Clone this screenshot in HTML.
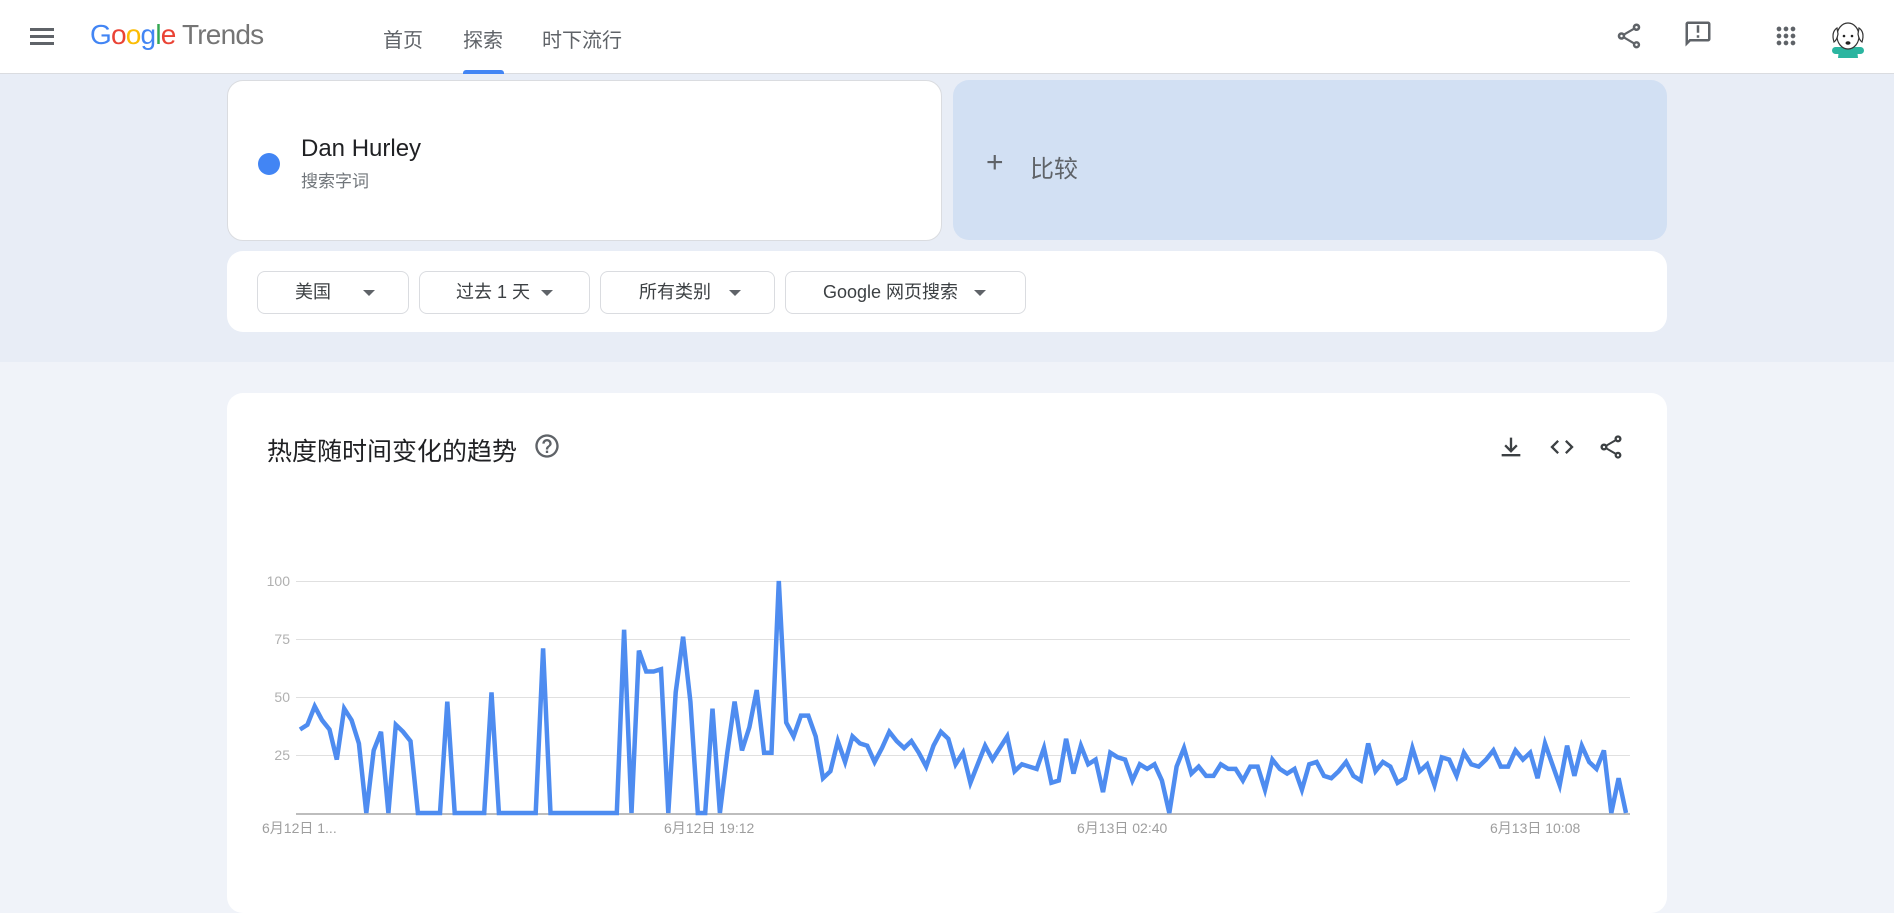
<!DOCTYPE html>
<html><head><meta charset="utf-8">
<style>
*{margin:0;padding:0;box-sizing:border-box}
body{width:1894px;height:872px;overflow:hidden;background:#f0f3f9;font-family:"Liberation Sans","Noto Sans CJK SC",sans-serif;position:relative}
.hdr{position:absolute;left:0;top:0;width:1894px;height:74px;background:#fff;border-bottom:1px solid #dadce0}
.band{position:absolute;left:0;top:74px;width:1894px;height:288px;background:#e8edf6}
.abs{position:absolute}
.nav{position:absolute;top:24px;font-size:20px;color:#5f6368}
.card{position:absolute;background:#fff;border-radius:16px}
.dd{position:absolute;top:271px;height:43px;border:1px solid #dadce0;border-radius:8px;background:#fff;font-size:18px;color:#3c4043;line-height:41px}
.dd i{position:absolute;top:18px;width:0;height:0;border-left:6px solid transparent;border-right:6px solid transparent;border-top:6px solid #5f6368}
.yl{position:absolute;left:250px;width:40px;text-align:right;font-size:14px;color:#b0b0b0}
.gl{position:absolute;left:296px;width:1334px;height:1px;background:#e0e0e0}
.xl{position:absolute;top:818px;font-size:14px;color:#9e9e9e;white-space:nowrap}
</style></head><body>
<div class="hdr"></div>
<div class="band"></div>
<div class="abs" style="left:30px;top:28px;width:24px;height:3px;background:#5f6368"></div>
<div class="abs" style="left:30px;top:35px;width:24px;height:3px;background:#5f6368"></div>
<div class="abs" style="left:30px;top:42px;width:24px;height:3px;background:#5f6368"></div>
<div class="abs" style="left:90px;top:19px;font-size:28px;letter-spacing:-0.8px;white-space:nowrap"><span style="color:#4285f4">G</span><span style="color:#ea4335">o</span><span style="color:#fbbc05">o</span><span style="color:#4285f4">g</span><span style="color:#34a853">l</span><span style="color:#ea4335">e</span><span style="color:#757575"> Trends</span></div>
<div class="nav" style="left:383px">首页</div>
<div class="nav" style="left:463px">探索</div>
<div class="nav" style="left:542px">时下流行</div>
<div class="abs" style="left:463px;top:70px;width:41px;height:4px;background:#4285f4;border-radius:3px 3px 0 0"></div>
<svg class="abs" style="left:1614px;top:21px" width="30" height="30" viewBox="0 0 24 24"><path fill="#5f6368" d="M18 16.08c-.76 0-1.44.3-1.960.77L8.91 12.7c.05-.23.09-.46.09-.7s-.04-.47-.09-.7l7.05-4.11c.54.5 1.25.81 2.04.81 1.66 0 3-1.34 3-3s-1.340-3-3-3-3 1.34-3 3c0 .24.04.47.09.7L8.04 9.81C7.5 9.31 6.79 9 6 9c-1.66 0-3 1.34-3 3s1.34 3 3 3c.79 0 1.5-.31 2.04-.81l7.12 4.16c-.05.21-.08.43-.08.65 0 1.61 1.31 2.92 2.92 2.92s2.92-1.31 2.92-2.92-1.31-2.92-2.92-2.920zM18 4c.55 0 1 .45 1 1s-.45 1-1 1-1-.45-1-1 .45-1 1-1zM6 13c-.55 0-1-.45-1-1s.45-1 1-1 1 .45 1 1-.45 1-1 1zm12 7.02c-.55 0-1-.45-1-1s.45-1 1-1 1 .45 1 1-.45 1-1 1z"/></svg>
<svg class="abs" style="left:1683px;top:19px" width="30" height="30" viewBox="0 0 24 24"><path fill="#5f6368" d="M20 2H4c-1.1 0-2 .9-2 2v18l4-4h14c1.1 0 2-.9 2-2V4c0-1.1-.9-2-2-2zm0 14H5.17L4 17.170V4h16v12zM11 5h2v6h-2zm0 8h2v2h-2z"/></svg>
<svg class="abs" style="left:1772px;top:22px" width="28" height="28" viewBox="0 0 24 24"><path fill="#5f6368" d="M6 8c1.1 0 2-.9 2-2s-.9-2-2-2-2 .9-2 2 .9 2 2 2zm6 12c1.1 0 2-.9 2-2s-.9-2-2-2-2 .9-2 2 .9 2 2 2zm-6 0c1.1 0 2-.9 2-2s-.9-2-2-2-2 .9-2 2 .9 2 2 2zm0-6c1.1 0 2-.9 2-2s-.9-2-2-2-2 .9-2 2 .9 2 2 2zm6 0c1.1 0 2-.9 2-2s-.9-2-2-2-2 .9-2 2 .9 2 2 2zm4-8c0 1.1.9 2 2 2s2-.9 2-2-.9-2-2-2-2 .9-2 2zm-4 2c1.1 0 2-.9 2-2s-.9-2-2-2-2 .9-2 2 .9 2 2 2zm6 6c1.1 0 2-.9 2-2s-.9-2-2-2-2 .9-2 2 .9 2 2 2zm0 6c1.1 0 2-.9 2-2s-.9-2-2-2-2 .9-2 2 .9 2 2 2z"/></svg>
<svg class="abs" style="left:1828px;top:18px" width="40" height="40" viewBox="0 0 40 40">
<path d="M10 40 L11 31 L29 31 L30 40Z" fill="#2bb5a0"/>
<rect x="4" y="29" width="32" height="7" rx="3.5" fill="#2bb5a0"/>
<ellipse cx="20" cy="18" rx="11" ry="13" fill="#fff" stroke="#333" stroke-width="1.2"/>
<path d="M9 10 Q3 14 6 24 Q9 22 10 16Z" fill="#fff" stroke="#333" stroke-width="1.2"/>
<path d="M31 10 Q37 14 34 24 Q31 22 30 16Z" fill="#fff" stroke="#333" stroke-width="1.2"/>
<circle cx="16" cy="18" r="1.3" fill="#222"/><circle cx="24" cy="18" r="1.3" fill="#222"/>
<ellipse cx="20" cy="25" rx="2.5" ry="1.8" fill="#222"/>
</svg>
<div class="card" style="left:227px;top:80px;width:715px;height:161px;border:1px solid #dadce0"></div>
<div class="abs" style="left:258px;top:153px;width:22px;height:22px;border-radius:50%;background:#4285f4"></div>
<div class="abs" style="left:301px;top:135px;font-size:24px;color:#202124">Dan Hurley</div>
<div class="abs" style="left:301px;top:167px;font-size:17px;color:#70757a">搜索字词</div>
<div class="card" style="left:953px;top:80px;width:714px;height:160px;background:#d2e0f3"></div>
<div class="abs" style="left:986px;top:146px;font-size:30px;color:#5f6368;font-weight:300">+</div>
<div class="abs" style="left:1030px;top:149px;font-size:24px;color:#5f6368">比较</div>
<div class="card" style="left:227px;top:251px;width:1440px;height:81px"></div>
<div class="dd" style="left:257px;width:152px"><span style="position:absolute;left:37px">美国</span><i style="left:105px"></i></div>
<div class="dd" style="left:419px;width:171px"><span style="position:absolute;left:36px">过去 1 天</span><i style="left:121px"></i></div>
<div class="dd" style="left:600px;width:175px"><span style="position:absolute;left:38px">所有类别</span><i style="left:128px"></i></div>
<div class="dd" style="left:785px;width:241px"><span style="position:absolute;left:37px">Google 网页搜索</span><i style="left:188px"></i></div>
<div class="card" style="left:227px;top:393px;width:1440px;height:520px"></div>
<div class="abs" style="left:267px;top:432px;font-size:25px;color:#202124">热度随时间变化的趋势</div>
<svg class="abs" style="left:533px;top:432px" width="28" height="28" viewBox="0 0 24 24"><path fill="#5f6368" d="M11 18h2v-2h-2v2zm1-16C6.48 2 2 6.48 2 12s4.48 10 10 10 10-4.48 10-10S17.52 2 12 2zm0 18c-4.41 0-8-3.59-8-8s3.59-8 8-8 8 3.59 8 8-3.59 8-8 8zm0-14c-2.21 0-4 1.79-4 4h2c0-1.1.9-2 2-2s2 .9 2 2c0 2-3 1.75-3 5h2c0-2.25 3-2.5 3-5 0-2.21-1.790-4-4-4z"/></svg>
<svg class="abs" style="left:1497px;top:433px" width="28" height="28" viewBox="0 0 24 24"><path fill="#3c4043" d="M4 18h16v2H4zM11 4h2v9.2l3.3-3.3 1.4 1.4L12 17 6.3 11.3l1.4-1.4L11 13.2z"/></svg>
<svg class="abs" style="left:1548px;top:433px" width="28" height="28" viewBox="0 0 24 24"><path fill="#3c4043" d="M9.4 16.6 4.8 12l4.6-4.6L8 6l-6 6 6 6 1.4-1.4zm5.2 0 4.6-4.6-4.6-4.6L16 6l6 6-6 6-1.4-1.4z"/></svg>
<svg class="abs" style="left:1597px;top:433px" width="28" height="28" viewBox="0 0 24 24"><path fill="#3c4043" d="M18 16.08c-.76 0-1.44.3-1.96.77L8.91 12.7c.05-.23.09-.46.09-.7s-.04-.47-.09-.7l7.05-4.11c.54.5 1.25.81 2.04.81 1.66 0 3-1.34 3-3s-1.34-3-3-3-3 1.34-3 3c0 .24.04.47.09.7L8.04 9.81C7.5 9.31 6.79 9 6 9c-1.66 0-3 1.34-3 3s1.34 3 3 3c.79 0 1.5-.31 2.04-.81l7.12 4.16c-.05.21-.08.43-.08.65 0 1.61 1.31 2.92 2.92 2.92s2.92-1.31 2.92-2.92-1.31-2.92-2.92-2.92zM18 4c.55 0 1 .45 1 1s-.45 1-1 1-1-.45-1-1 .45-1 1-1zM6 13c-.55 0-1-.45-1-1s.45-1 1-1 1 .45 1 1-.45 1-1 1zm12 7.02c-.55 0-1-.45-1-1s.45-1 1-1 1 .45 1 1-.45 1-1 1z"/></svg>
<div class="gl" style="top:581px"></div><div class="yl" style="top:573px">100</div>
<div class="gl" style="top:639px"></div><div class="yl" style="top:631px">75</div>
<div class="gl" style="top:697px"></div><div class="yl" style="top:689px">50</div>
<div class="gl" style="top:755px"></div><div class="yl" style="top:747px">25</div>
<div class="gl" style="top:813px;height:2px;background:#bdbdbd"></div>
<div class="xl" style="left:262px">6月12日 1...</div>
<div class="xl" style="left:664px">6月12日 19:12</div>
<div class="xl" style="left:1077px">6月13日 02:40</div>
<div class="xl" style="left:1490px">6月13日 10:08</div>
<svg class="abs" style="left:0;top:0" width="1894" height="872"><polyline id="pl" fill="none" stroke="#4e8cf0" stroke-width="4.5" stroke-linejoin="miter" points=""/></svg>
<script>
var d=[36,38,46,40,36,23,45,40,30,0,27,35,0,38,35,31,0,0,0,0,48,0,0,0,0,0,52,0,0,0,0,0,0,71,0,0,0,0,0,0,0,0,0,0,79,0,70,61,61,62,0,52,76,48,0,0,45,0,26,48,27,37,53,26,26,100,39,33,42,42,33,15,18,31,22,33,30,29,22,28,35,31,28,31,26,20,29,35,32,21,26,13,21,29,23,28,33,18,21,20,19,28,13,14,32,17,29,21,23,9,26,24,23,14,21,19,21,14,0,20,28,17,20,16,16,21,19,19,14,20,20,10,23,19,17,19,10,21,22,16,15,18,22,16,14,30,18,22,20,13,15,28,18,21,12,24,23,16,26,21,20,23,27,20,20,27,23,26,15,30,21,12,29,16,29,22,19,27,0,15,0];
var x0=300,x1=1626,y0=813,y100=581,p=[];
for(var i=0;i<d.length;i++){p.push((x0+(x1-x0)*i/(d.length-1)).toFixed(1)+","+(y0-(y0-y100)*d[i]/100).toFixed(1));}
document.getElementById("pl").setAttribute("points",p.join(" "));
</script>
</body></html>
